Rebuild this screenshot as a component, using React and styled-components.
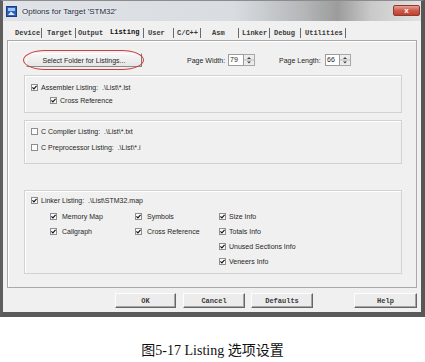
import React from "react";
import styled, { createGlobalStyle } from "styled-components";

const GlobalStyle = createGlobalStyle`
  html, body {
    margin: 0;
    padding: 0;
    background: #ffffff;
  }
  body {
    width: 425px;
    height: 362px;
    overflow: hidden;
  }
`;

const Page = styled.div`
  width: 425px;
  height: 362px;
  display: flex;
  flex-direction: column;
  font-family: "Liberation Sans", Arial, sans-serif;
  color: #262626;
`;

const Window = styled.div`
  width: 425px;
  height: 317px;
  box-sizing: border-box;
  display: flex;
  flex-direction: column;
  border-top: 1px solid #8c8c8c;
  border-left: 3px solid #5e5e5e;
  border-right: 4px solid #575757;
  border-bottom: 5px solid #5a5a5a;
  background: #f0f0f0;
`;

const TitleBar = styled.div`
  height: 20px;
  display: flex;
  align-items: center;
  padding-left: 3px;
  background: linear-gradient(
    90deg,
    #dfe3e8 0%,
    #d9dde2 55%,
    #b4b6b8 72%,
    #9c9c9c 80%,
    #c9c9c9 88%,
    #e2e2e2 100%
  );
`;

const TitleText = styled.span`
  margin-left: 5px;
  font-size: 8px;
  color: #1f2b3c;
  text-shadow: 0 0 3px #ffffff;
`;

const CloseButton = styled.div`
  margin-left: auto;
  margin-right: 1px;
  align-self: flex-start;
  margin-top: 4px;
  width: 27px;
  height: 11px;
  border-radius: 2px;
  border: 1px solid #8a3b32;
  box-sizing: border-box;
  background: linear-gradient(180deg, #e6a296 0%, #cf5a4b 50%, #c0402f 100%);
  display: flex;
  align-items: center;
  justify-content: center;
  color: #ffffff;
  font-size: 8px;
  font-weight: bold;
  line-height: 1;
`;

const Client = styled.div`
  flex: 1;
  display: flex;
  flex-direction: column;
  padding: 5px 4px 4px 4px;
`;

const TabRow = styled.div`
  height: 14px;
  display: flex;
  align-items: center;
  padding-left: 2px;
`;

const Tab = styled.div`
  box-sizing: border-box;
  width: ${(p) => p.$w}px;
  height: 10px;
  padding-left: ${(p) => p.$pl}px;
  border-right: ${(p) => (p.$sep ? "1px solid #6a6a6a" : "none")};
  font-family: "Liberation Mono", "Courier New", monospace;
  font-weight: bold;
  font-size: 7px;
  line-height: ${(p) => (p.$active ? "8px" : "10px")};
  color: ${(p) => (p.$active ? "#111" : "#3a3a3a")};
  white-space: nowrap;
`;

const Panel = styled.div`
  height: 248px;
  box-sizing: border-box;
  border: 1px solid #a9a9a9;
  box-shadow: inset 1px 1px #ffffff;
  display: flex;
  flex-direction: column;
`;

const TopRow = styled.div`
  margin-top: 12px;
  height: 14px;
  display: flex;
  align-items: center;
  padding-left: 18px;
  font-size: 7px;
`;

const FolderButton = styled.div`
  position: relative;
  width: 116px;
  height: 14px;
  box-sizing: border-box;
  background: linear-gradient(180deg, #f6f6f6, #e6e6e6);
  border: 1px solid;
  border-color: #fcfcfc #7c7c7c #8a8a8a #fcfcfc;
  display: flex;
  align-items: center;
  justify-content: center;
  font-size: 7px;

  &::after {
    content: "";
    position: absolute;
    left: -4px;
    right: -3px;
    top: -4px;
    bottom: -4px;
    border: 1.5px solid #c8403d;
    border-radius: 22px / 10px;
  }
`;

const FieldLabel = styled.span`
  width: ${(p) => p.$w}px;
  margin-left: ${(p) => p.$ml}px;
  white-space: nowrap;
`;

const NumberBox = styled.div`
  width: ${(p) => p.$w}px;
  height: 12px;
  box-sizing: border-box;
  border: 1px solid #9c9c9c;
  background: #ffffff;
  padding-left: 1px;
  font-size: 7px;
  line-height: 10px;
`;

const SpinBox = styled.div`
  width: 11px;
  height: 12px;
  box-sizing: border-box;
  border: 1px solid #a8a8a8;
  border-left: none;
  background: #ececec;
  display: flex;
`;

const Group = styled.div`
  margin-left: 16px;
  margin-top: ${(p) => p.$mt}px;
  width: 378px;
  height: ${(p) => p.$h}px;
  box-sizing: border-box;
  border: 1px solid #d2d2d2;
  box-shadow: inset 1px 1px #ffffff;
  padding: ${(p) => p.$pt}px 0 0 6px;
  display: flex;
  flex-direction: column;
  gap: ${(p) => p.$gap || 0}px;
`;

const Row = styled.div`
  height: ${(p) => p.$h}px;
  display: flex;
  align-items: center;
  padding-left: ${(p) => p.$indent || 0}px;
  font-size: 7px;
  white-space: nowrap;
`;

const OptionGrid = styled.div`
  margin-top: 2px;
  padding-left: 19px;
  display: grid;
  grid-template-columns: 85px 84px 1fr;
  grid-auto-rows: 15px;
`;

const Cell = styled.div`
  grid-column: ${(p) => p.$col};
  grid-row: ${(p) => p.$row};
  display: flex;
  align-items: center;
  font-size: 7px;
  white-space: nowrap;
`;

const Box = styled.span`
  width: 7px;
  height: 7px;
  box-sizing: border-box;
  border: 1px solid #8e8e8e;
  background: #fbfbfb;
  margin-right: ${(p) => p.$gap}px;
  display: flex;
  flex-shrink: 0;
`;

const ButtonRow = styled.div`
  margin-top: 5px;
  height: 15px;
  display: flex;
  padding-left: 108px;
`;

const DialogButton = styled.div`
  width: ${(p) => p.$w}px;
  height: 15px;
  margin-left: ${(p) => p.$ml}px;
  box-sizing: border-box;
  border: 1px solid;
  border-color: #fdfdfd #666666 #666666 #fdfdfd;
  box-shadow: inset -1px -1px #a6a6a6;
  background: #ececec;
  display: flex;
  align-items: center;
  justify-content: center;
  font-family: "Liberation Mono", "Courier New", monospace;
  font-weight: bold;
  font-size: 7px;
  color: #3a3a3a;
`;

const Caption = styled.div`
  margin-top: 26px;
  text-align: center;
  font-family: "Liberation Serif", "Noto Sans CJK SC", serif;
  font-size: 14px;
  line-height: 16px;
  color: #111111;
`;

const AppIcon = () => (
  <svg width="11" height="11" viewBox="0 0 11 11">
    <rect x="0.5" y="0.5" width="10" height="10" fill="#2f5fb8" stroke="#1d3d7a" />
    <rect x="2" y="2" width="7" height="3" fill="#9cc4ff" />
    <path d="M2 9 L5 5.5 L9 9 Z" fill="#ffffff" opacity="0.85" />
  </svg>
);

const Spinner = () => (
  <SpinBox>
    <svg width="10" height="10" viewBox="0 0 10 10">
      <path d="M3 4 L5 2 L7 4 Z" fill="#444" />
      <line x1="0" y1="5" x2="10" y2="5" stroke="#b8b8b8" />
      <path d="M3 6.5 L5 8.5 L7 6.5 Z" fill="#444" />
    </svg>
  </SpinBox>
);

const Check = ({ on, gap = 3, children }) => (
  <>
    <Box $gap={gap}>
      {on && (
        <svg width="5" height="5" viewBox="0 0 5 5">
          <path d="M0.4 2.4 L1.9 3.9 L4.6 0.8" fill="none" stroke="#111" strokeWidth="1.2" />
        </svg>
      )}
    </Box>
    {children}
  </>
);

const tabs = [
  { label: "Device", w: 33, pl: 6, sep: true },
  { label: "Target", w: 34, pl: 5, sep: true },
  { label: "Output", w: 30, pl: 2 },
  { label: "Listing", w: 38, pl: 4, sep: true, active: true },
  { label: "User", w: 30, pl: 4, sep: true },
  { label: "C/C++", w: 27, pl: 3, sep: true },
  { label: "Asm", w: 38, pl: 11, sep: true },
  { label: "Linker", w: 31, pl: 3, sep: true },
  { label: "Debug", w: 31, pl: 4, sep: true },
  { label: "Utilities", w: 45, pl: 4, sep: true },
];

const linkerOptions = [
  { label: "Memory Map", col: 1, row: 1 },
  { label: "Symbols", col: 2, row: 1 },
  { label: "Size Info", col: 3, row: 1 },
  { label: "Callgraph", col: 1, row: 2 },
  { label: "Cross Reference", col: 2, row: 2 },
  { label: "Totals Info", col: 3, row: 2 },
  { label: "Unused Sections Info", col: 3, row: 3 },
  { label: "Veneers Info", col: 3, row: 4 },
];

const App = () => {
  return (
    <>
      <GlobalStyle />
      <Page>
        <Window>
          <TitleBar>
            <AppIcon />
            <TitleText>Options for Target 'STM32'</TitleText>
            <CloseButton>x</CloseButton>
          </TitleBar>
          <Client>
            <TabRow>
              {tabs.map((t) => (
                <Tab key={t.label} $w={t.w} $pl={t.pl} $sep={t.sep} $active={t.active}>
                  {t.label}
                </Tab>
              ))}
            </TabRow>
            <Panel>
              <TopRow>
                <FolderButton>Select Folder for Listings...</FolderButton>
                <FieldLabel $w={41} $ml={45}>Page Width:</FieldLabel>
                <NumberBox $w={16}>79</NumberBox>
                <Spinner />
                <FieldLabel $w={46} $ml={24}>Page Length:</FieldLabel>
                <NumberBox $w={15}>66</NumberBox>
                <Spinner />
              </TopRow>

              <Group $mt={8} $h={38} $pt={5}>
                <Row $h={13}>
                  <Check on>Assembler Listing:&nbsp;&nbsp;.\List\*.lst</Check>
                </Row>
                <Row $h={13} $indent={19}>
                  <Check on>Cross Reference</Check>
                </Row>
              </Group>

              <Group $mt={7} $h={44} $pt={3} $gap={2}>
                <Row $h={14}>
                  <Check>C Compiler Listing:&nbsp;&nbsp;.\List\*.txt</Check>
                </Row>
                <Row $h={14}>
                  <Check>C Preprocessor Listing:&nbsp;&nbsp;.\List\*.i</Check>
                </Row>
              </Group>

              <Group $mt={26} $h={84} $pt={2}>
                <Row $h={14}>
                  <Check on>Linker Listing:&nbsp;&nbsp;.\List\STM32.map</Check>
                </Row>
                <OptionGrid>
                  {linkerOptions.map((o) => (
                    <Cell key={o.label} $col={o.col} $row={o.row}>
                      <Check on gap={o.col === 3 ? 3 : 5}>{o.label}</Check>
                    </Cell>
                  ))}
                </OptionGrid>
              </Group>
            </Panel>
            <ButtonRow>
              <DialogButton $w={61} $ml={0}>OK</DialogButton>
              <DialogButton $w={62} $ml={7}>Cancel</DialogButton>
              <DialogButton $w={62} $ml={6}>Defaults</DialogButton>
              <DialogButton $w={63} $ml={41}>Help</DialogButton>
            </ButtonRow>
          </Client>
        </Window>
        <Caption>图5-17 Listing 选项设置</Caption>
      </Page>
    </>
  );
};

export default App;
